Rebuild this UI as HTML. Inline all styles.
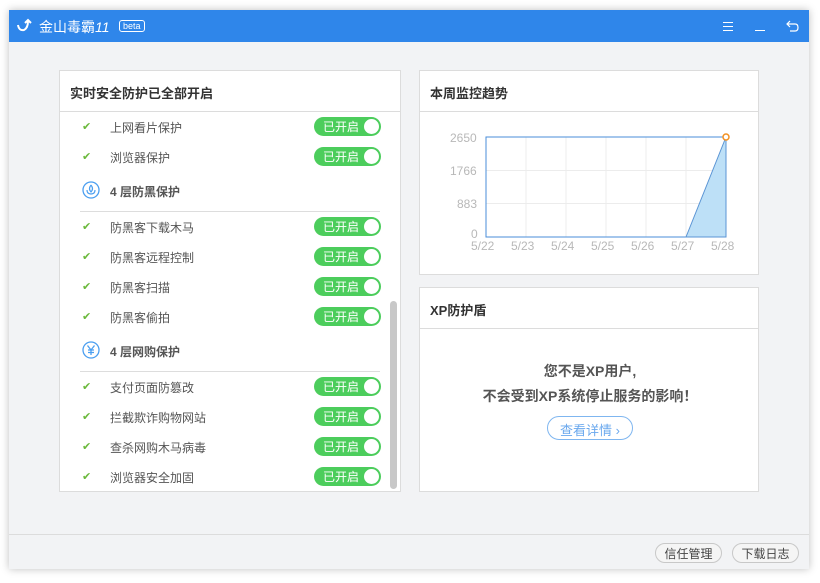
<!DOCTYPE html>
<html><head><meta charset="utf-8"><style>
*{margin:0;padding:0;box-sizing:border-box}
body{width:820px;height:583px;background:#fff;font-family:"Liberation Sans","Noto Sans CJK SC",sans-serif;position:relative;overflow:hidden}
.win{position:absolute;left:9px;top:10px;width:800px;height:559px;background:#f2f3f5;box-shadow:0 0 8px rgba(0,0,0,.25)}
.bar{position:absolute;left:0;top:0;width:800px;height:32px;background:#2f86ea;color:#fff}
.panel{position:absolute;background:#fff;border:1px solid #dcdcdc}
.ph{height:41px;border-bottom:1px solid #dcdcdc;font-size:13px;font-weight:bold;color:#333;padding:12px 0 0 10px}
.row{position:absolute;left:0;width:330px;height:20px;font-size:12px;color:#555}
.row .ck{position:absolute;left:22px;top:2px;color:#6ab83a;font-size:11px}
.row .t{position:absolute;left:50px;top:1px}
.tg{position:absolute;left:254px;top:-1px;width:67px;height:19px;border-radius:10px;background:#4ccd5c;color:#fff;font-size:12px;padding:1px 0 0 9px}
.tg:after{content:"";position:absolute;right:2px;top:2px;width:15px;height:15px;border-radius:50%;background:#fff}
.sec{position:absolute;left:22px;width:300px;font-size:12px;font-weight:bold;color:#555}
.sep{position:absolute;left:20px;width:300px;height:1px;background:#ddd}
.ax{position:absolute;font-size:12px;color:#b8b8b8}
.btn{position:absolute;top:533px;height:20px;border:1px solid #c8c8c8;border-radius:10px;font-size:12px;color:#444;text-align:center;padding-top:1px;background:#f5f5f5}
</style></head><body>
<div class="win">
 <div class="bar">
  <svg style="position:absolute;left:7px;top:7px" width="18" height="18" viewBox="0 0 18 18"><path d="M2 8 Q3 14 8 13 Q12 11 12 4 M9 6 L12 3 L15 6" stroke="#fff" stroke-width="2" fill="none"/></svg>
  <span style="position:absolute;left:30px;top:7px;font-size:14px">金山毒霸<i>11</i></span>
  <span style="position:absolute;left:110px;top:10px;font-size:9px;border:1px solid #fff;border-radius:3px;padding:0 3px;line-height:10px">beta</span>
  <div style="position:absolute;left:714px;top:12px;width:10px;height:1px;background:#fff;box-shadow:0 4px 0 #fff,0 8px 0 #fff"></div>
  <div style="position:absolute;left:746px;top:20px;width:10px;height:1px;background:#fff"></div>
  <svg style="position:absolute;left:777px;top:9px" width="14" height="14" viewBox="0 0 14 14"><path d="M4 2 L1 5 L4 8 M1 5 H9 Q12 5 12 8.5 Q12 12 9 12 H4" stroke="#fff" stroke-width="1.2" fill="none"/></svg>
 </div>
 <div style="position:absolute;left:0;top:524px;width:800px;height:1px;background:#dcdcdc"></div>
 <div class="btn" style="left:646px;width:67px">信任管理</div>
 <div class="btn" style="left:723px;width:67px">下载日志</div>
</div>

<div class="panel" style="left:59px;top:70px;width:342px;height:422px">
 <div class="ph">实时安全防护已全部开启</div>
 <div style="position:absolute;left:330px;top:230px;width:7px;height:188px;background:#c8c8c8;border-radius:4px"></div>
 <div class="row" style="top:47px"><span class="ck">✔</span><span class="t">上网看片保护</span><span class="tg">已开启</span></div>
 <div class="row" style="top:77px"><span class="ck">✔</span><span class="t">浏览器保护</span><span class="tg">已开启</span></div>
 <div class="sec" style="top:112px"><svg style="position:absolute;left:0;top:-2px" width="18" height="18"><circle cx="9" cy="9" r="8" fill="none" stroke="#4a9ef0" stroke-width="1.3"/><path d="M9 4 Q12 8 9 11 Q6 8 9 4 M5 9 Q5 13 9 13 M13 9 Q13 13 9 13" stroke="#4a9ef0" fill="none" stroke-width="1.2"/></svg><span style="position:absolute;left:28px">4 层防黑保护</span></div>
 <div class="sep" style="top:140px"></div>
 <div class="row" style="top:147px"><span class="ck">✔</span><span class="t">防黑客下载木马</span><span class="tg">已开启</span></div>
 <div class="row" style="top:177px"><span class="ck">✔</span><span class="t">防黑客远程控制</span><span class="tg">已开启</span></div>
 <div class="row" style="top:207px"><span class="ck">✔</span><span class="t">防黑客扫描</span><span class="tg">已开启</span></div>
 <div class="row" style="top:237px"><span class="ck">✔</span><span class="t">防黑客偷拍</span><span class="tg">已开启</span></div>
 <div class="sec" style="top:272px"><svg style="position:absolute;left:0;top:-2px" width="18" height="18"><circle cx="9" cy="9" r="8" fill="none" stroke="#4a9ef0" stroke-width="1.3"/><path d="M5.5 4.5 L9 9 L12.5 4.5 M9 9 V14 M6 9 H12 M6 11.5 H12" stroke="#4a9ef0" fill="none" stroke-width="1.3"/></svg><span style="position:absolute;left:28px">4 层网购保护</span></div>
 <div class="sep" style="top:300px"></div>
 <div class="row" style="top:307px"><span class="ck">✔</span><span class="t">支付页面防篡改</span><span class="tg">已开启</span></div>
 <div class="row" style="top:337px"><span class="ck">✔</span><span class="t">拦截欺诈购物网站</span><span class="tg">已开启</span></div>
 <div class="row" style="top:367px"><span class="ck">✔</span><span class="t">查杀网购木马病毒</span><span class="tg">已开启</span></div>
 <div class="row" style="top:397px"><span class="ck">✔</span><span class="t">浏览器安全加固</span><span class="tg">已开启</span></div>
</div>

<div class="panel" style="left:419px;top:70px;width:340px;height:205px">
 <div class="ph">本周监控趋势</div>
 <svg style="position:absolute;left:0;top:0" width="340" height="205">
  <g stroke="#ececec"><line x1="106" y1="66" x2="106" y2="166"/><line x1="146" y1="66" x2="146" y2="166"/><line x1="186" y1="66" x2="186" y2="166"/><line x1="226" y1="66" x2="226" y2="166"/><line x1="266" y1="66" x2="266" y2="166"/><line x1="66" y1="99.5" x2="306" y2="99.5"/><line x1="66" y1="132.5" x2="306" y2="132.5"/></g>
  <rect x="66" y="66" width="240" height="100" fill="none" stroke="#4a8ed8"/>
  <path d="M266 166 L306 66 L306 166 Z" fill="#bde0f7" stroke="#5a94d4"/>
  <circle cx="306" cy="66" r="3" fill="#fff" stroke="#f39020" stroke-width="1.5"/>
 </svg>
 <div class="ax" style="left:30px;top:60px">2650</div>
 <div class="ax" style="left:30px;top:93px">1766</div>
 <div class="ax" style="left:37px;top:126px">883</div>
 <div class="ax" style="left:51px;top:156px">0</div>
 <div class="ax" style="left:51px;top:168px">5/22</div>
 <div class="ax" style="left:91px;top:168px">5/23</div>
 <div class="ax" style="left:131px;top:168px">5/24</div>
 <div class="ax" style="left:171px;top:168px">5/25</div>
 <div class="ax" style="left:211px;top:168px">5/26</div>
 <div class="ax" style="left:251px;top:168px">5/27</div>
 <div class="ax" style="left:291px;top:168px">5/28</div>
</div>

<div class="panel" style="left:419px;top:287px;width:340px;height:205px">
 <div class="ph">XP防护盾</div>
 <div style="position:absolute;left:0;width:340px;top:71px;text-align:center;font-size:14px;font-weight:bold;color:#555;line-height:25px">您不是XP用户,<br>不会受到XP系统停止服务的影响！</div>
 <div style="position:absolute;left:127px;top:128px;width:86px;height:24px;border:1px solid #7fb6f0;border-radius:12px;color:#6aa8ee;font-size:13px;text-align:center;padding-top:3px">查看详情 ›</div>
</div>
</body></html>
